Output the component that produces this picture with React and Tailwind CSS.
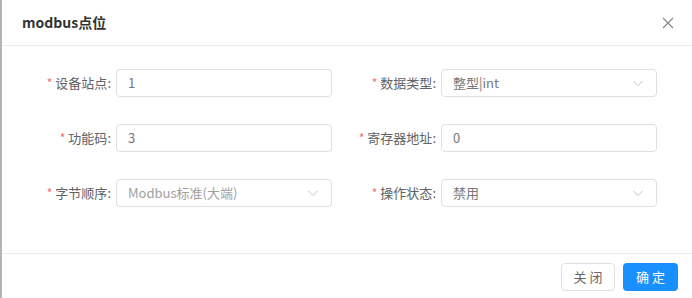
const font = { fontFamily: '"Noto Sans CJK SC", "Noto Sans", sans-serif' };

function Chevron() {
  return (
    <svg width="12" height="12" viewBox="0 0 12 12" fill="none" className="shrink-0">
      <path d="M1.5 4l4.5 4.5L10.5 4" stroke="#c0c4cc" strokeWidth="1" />
    </svg>
  );
}

function Field({ label, value, select, muted }) {
  return (
    <div className="flex items-center">
      <div className="w-[100px] pr-[5px] flex justify-end items-center text-[13px] text-[#606266]">
        <span className="text-[#f56c6c] text-[12px] mr-[3px] leading-none">*</span>
        <span>{label}:</span>
      </div>
      <div className="w-[216px] h-[28px] border border-[#dcdfe6] rounded-[4px] flex items-center justify-between pl-[11px] pr-[12px]">
        <span className={`text-[13px] ${muted ? "text-[#a0a0a0]" : "text-[#777]"}`}>{value}</span>
        {select && <Chevron />}
      </div>
    </div>
  );
}

export default function App() {
  return (
    <div className="w-[692px] h-[298px] bg-white border-l-2 border-[#b5b5b5] overflow-hidden flex flex-col" style={font}>
      {/* HEADER */}
      <div className="h-[46px] shrink-0 border-b border-[#ebebeb] flex items-center justify-between pl-[20px] pr-[18px]">
        <span className="text-[14px] font-bold text-[#333]">modbus点位</span>
        <svg width="12" height="12" viewBox="0 0 12 12" fill="none">
          <path d="M1 1l10 10M11 1L1 11" stroke="#888" strokeWidth="1.2" />
        </svg>
      </div>

      {/* BODY */}
      <div className="grid grid-cols-[316px_316px] gap-x-[9px] gap-y-[27px] pl-[14px] pt-[23px] pb-[46px] border-b border-[#ebebeb]">
        <Field label="设备站点" value="1" />
        <Field label="数据类型" value="整型|int" select />
        <Field label="功能码" value="3" />
        <Field label="寄存器地址" value="0" />
        <Field label="字节顺序" value="Modbus标准(大端)" select muted />
        <Field label="操作状态" value="禁用" select />
      </div>

      {/* FOOTER */}
      <div className="flex justify-end gap-[8px] pr-[14px] pt-[9px]">
        <button className="w-[54px] h-[28px] border border-[#dcdfe6] rounded-[4px] bg-white text-[13px] text-[#666]">关 闭</button>
        <button className="w-[55px] h-[28px] rounded-[4px] bg-[#1890ff] text-[13px] text-white">确 定</button>
      </div>
    </div>
  );
}
